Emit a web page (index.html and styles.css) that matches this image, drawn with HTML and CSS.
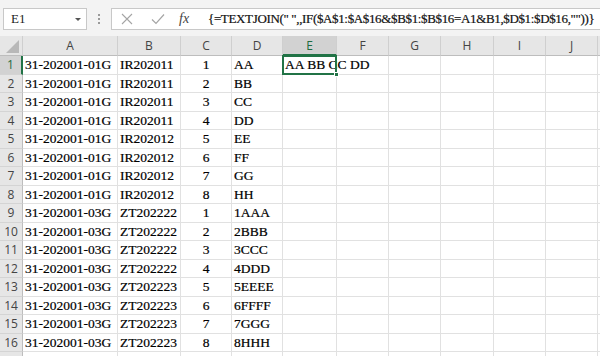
FILE: index.html
```
<!DOCTYPE html>
<html>
<head>
<meta charset="utf-8">
<link rel="stylesheet" href="styles.css">
</head>
<body>
<div class="app">
  <div class="toolbar">
    <div class="namebox"><span class="name">E1</span><span class="caret"></span></div>
    <div class="dots"><i></i><i></i><i></i></div>
    <div class="fbar">
      <div class="fbtns">
        <svg class="ic" width="14" height="14" viewBox="0 0 14 14"><path d="M2 2L12 12M12 2L2 12" stroke="#a5a5a5" stroke-width="1.1" fill="none"/></svg>
        <svg class="ic ic-ok" width="16" height="14" viewBox="0 0 16 14"><path d="M2 7.5L6 11.5L14 2.5" stroke="#a5a5a5" stroke-width="1.2" fill="none"/></svg>
        <span class="fx">fx</span>
      </div>
      <div class="formula">{=TEXTJOIN(" ",,IF($A$1:$A$16&amp;$B$1:$B$16=A1&amp;B1,$D$1:$D$16,""))}</div>
    </div>
  </div>
  <div class="sheet">
    <div class="row head">
      <div class="corner"><span class="tri"></span></div>
      <div class="ch">A</div><div class="ch">B</div><div class="ch">C</div><div class="ch">D</div><div class="ch sel">E</div><div class="ch">F</div><div class="ch">G</div><div class="ch">H</div><div class="ch">I</div><div class="ch">J</div><div class="ch"></div>
    </div>
    <div class="row"><div class="rh sel">1</div><div class="c">31-202001-01G</div><div class="c">IR202011</div><div class="c n">1</div><div class="c">AA</div><div class="c active"><span class="ov">AA BB CC DD</span><div class="selbox"><span class="handle"></span></div></div><div class="c nb"></div><div class="c"></div><div class="c"></div><div class="c"></div><div class="c"></div><div class="c"></div></div>
    <div class="row"><div class="rh">2</div><div class="c">31-202001-01G</div><div class="c">IR202011</div><div class="c n">2</div><div class="c">BB</div><div class="c"></div><div class="c"></div><div class="c"></div><div class="c"></div><div class="c"></div><div class="c"></div><div class="c"></div></div>
    <div class="row"><div class="rh">3</div><div class="c">31-202001-01G</div><div class="c">IR202011</div><div class="c n">3</div><div class="c">CC</div><div class="c"></div><div class="c"></div><div class="c"></div><div class="c"></div><div class="c"></div><div class="c"></div><div class="c"></div></div>
    <div class="row"><div class="rh">4</div><div class="c">31-202001-01G</div><div class="c">IR202011</div><div class="c n">4</div><div class="c">DD</div><div class="c"></div><div class="c"></div><div class="c"></div><div class="c"></div><div class="c"></div><div class="c"></div><div class="c"></div></div>
    <div class="row"><div class="rh">5</div><div class="c">31-202001-01G</div><div class="c">IR202012</div><div class="c n">5</div><div class="c">EE</div><div class="c"></div><div class="c"></div><div class="c"></div><div class="c"></div><div class="c"></div><div class="c"></div><div class="c"></div></div>
    <div class="row"><div class="rh">6</div><div class="c">31-202001-01G</div><div class="c">IR202012</div><div class="c n">6</div><div class="c">FF</div><div class="c"></div><div class="c"></div><div class="c"></div><div class="c"></div><div class="c"></div><div class="c"></div><div class="c"></div></div>
    <div class="row"><div class="rh">7</div><div class="c">31-202001-01G</div><div class="c">IR202012</div><div class="c n">7</div><div class="c">GG</div><div class="c"></div><div class="c"></div><div class="c"></div><div class="c"></div><div class="c"></div><div class="c"></div><div class="c"></div></div>
    <div class="row"><div class="rh">8</div><div class="c">31-202001-01G</div><div class="c">IR202012</div><div class="c n">8</div><div class="c">HH</div><div class="c"></div><div class="c"></div><div class="c"></div><div class="c"></div><div class="c"></div><div class="c"></div><div class="c"></div></div>
    <div class="row"><div class="rh">9</div><div class="c">31-202001-03G</div><div class="c">ZT202222</div><div class="c n">1</div><div class="c">1AAA</div><div class="c"></div><div class="c"></div><div class="c"></div><div class="c"></div><div class="c"></div><div class="c"></div><div class="c"></div></div>
    <div class="row"><div class="rh">10</div><div class="c">31-202001-03G</div><div class="c">ZT202222</div><div class="c n">2</div><div class="c">2BBB</div><div class="c"></div><div class="c"></div><div class="c"></div><div class="c"></div><div class="c"></div><div class="c"></div><div class="c"></div></div>
    <div class="row"><div class="rh">11</div><div class="c">31-202001-03G</div><div class="c">ZT202222</div><div class="c n">3</div><div class="c">3CCC</div><div class="c"></div><div class="c"></div><div class="c"></div><div class="c"></div><div class="c"></div><div class="c"></div><div class="c"></div></div>
    <div class="row"><div class="rh">12</div><div class="c">31-202001-03G</div><div class="c">ZT202222</div><div class="c n">4</div><div class="c">4DDD</div><div class="c"></div><div class="c"></div><div class="c"></div><div class="c"></div><div class="c"></div><div class="c"></div><div class="c"></div></div>
    <div class="row"><div class="rh">13</div><div class="c">31-202001-03G</div><div class="c">ZT202223</div><div class="c n">5</div><div class="c">5EEEE</div><div class="c"></div><div class="c"></div><div class="c"></div><div class="c"></div><div class="c"></div><div class="c"></div><div class="c"></div></div>
    <div class="row"><div class="rh">14</div><div class="c">31-202001-03G</div><div class="c">ZT202223</div><div class="c n">6</div><div class="c">6FFFF</div><div class="c"></div><div class="c"></div><div class="c"></div><div class="c"></div><div class="c"></div><div class="c"></div><div class="c"></div></div>
    <div class="row"><div class="rh">15</div><div class="c">31-202001-03G</div><div class="c">ZT202223</div><div class="c n">7</div><div class="c">7GGG</div><div class="c"></div><div class="c"></div><div class="c"></div><div class="c"></div><div class="c"></div><div class="c"></div><div class="c"></div></div>
    <div class="row"><div class="rh">16</div><div class="c">31-202001-03G</div><div class="c">ZT202223</div><div class="c n">8</div><div class="c">8HHH</div><div class="c"></div><div class="c"></div><div class="c"></div><div class="c"></div><div class="c"></div><div class="c"></div><div class="c"></div></div>
    <div class="row"><div class="rh"></div><div class="c"></div><div class="c"></div><div class="c"></div><div class="c"></div><div class="c"></div><div class="c"></div><div class="c"></div><div class="c"></div><div class="c"></div><div class="c"></div><div class="c"></div></div>
  </div>
</div>
</body>
</html>
```
FILE: styles.css
```
* { box-sizing: border-box; }
html, body { margin: 0; padding: 0; background: #fff; }
body { width: 600px; height: 356px; overflow: hidden; }
.app { width: 600px; height: 356px; overflow: hidden; display: flex; flex-direction: column; }

.toolbar { height: 36px; flex: none; background: #f3f3f3; display: flex; align-items: flex-start; padding-top: 8px; padding-left: 3px; }
.namebox { flex: none; width: 84px; height: 22px; background: #fff; border: 1px solid #c8c8c8; display: flex; align-items: center; justify-content: space-between; padding: 0 5px 0 7px; }
.name { font-family: "Liberation Serif", serif; font-size: 13px; color: #222; }
.caret { width: 0; height: 0; border-left: 3px solid transparent; border-right: 3px solid transparent; border-top: 3px solid #555; }
.dots { flex: none; width: 24px; height: 22px; display: flex; flex-direction: column; align-items: center; justify-content: center; gap: 2px; }
.dots i { display: block; width: 2px; height: 2px; background: #9a9a9a; }
.fbar { flex: 1; min-width: 0; height: 22px; background: #fff; border: 1px solid #c8c8c8; border-right: none; display: flex; align-items: center; }
.fbtns { width: 92px; flex: none; display: flex; align-items: center; padding-left: 8px; height: 100%; }
.ic { display: block; }
.ic-ok { margin-left: 16px; }
.fx { margin-left: 13px; font-family: "Liberation Serif", serif; font-style: italic; font-size: 14px; color: #444; }
.formula { flex: 1; min-width: 0; overflow: hidden; font-family: "Liberation Serif", serif; font-size: 13px; letter-spacing: -0.35px; color: #111; white-space: nowrap; padding-left: 4px; -webkit-text-stroke: 0.2px #111; }

.sheet { flex: 1; display: flex; flex-direction: column; }
.row { display: grid; grid-template-columns: 23px 95px 63px 51px 51px 54px 52px 52px 53px 52px 52px 20px; height: 18.5px; flex: none; }
.row.head { height: 20px; background: #e6e6e6; }
.corner { position: relative; border-right: 1px solid #cfcfcf; border-bottom: 1px solid #bdbdbd; }
.tri { position: absolute; right: 3px; bottom: 2px; width: 0; height: 0; border-left: 13px solid transparent; border-bottom: 13px solid #b8b8b8; }
.ch { font-family: "Open Sans", "Liberation Sans", sans-serif; font-size: 12px; color: #444; display: flex; align-items: center; justify-content: center; border-right: 1px solid #cfcfcf; border-bottom: 1px solid #bdbdbd; }
.ch.sel { background: #d2d2d2; color: #1e6b3f; border-bottom: 2px solid #217346; }
.rh { background: #e6e6e6; font-family: "Open Sans", "Liberation Sans", sans-serif; font-size: 12px; color: #444; display: flex; align-items: center; justify-content: center; border-right: 1px solid #bdbdbd; border-bottom: 1px solid #d4d4d4; }
.rh.sel { background: #d2d2d2; color: #1e6b3f; border-right: 2px solid #217346; }
.c { font-family: "Liberation Serif", serif; font-size: 13.5px; color: #000; -webkit-text-stroke: 0.2px #000; border-right: 1px solid #e1e1e1; border-bottom: 1px solid #e1e1e1; padding-left: 2px; white-space: nowrap; display: flex; align-items: center; line-height: 1; }
.c.n { justify-content: center; padding-left: 0; }
.c.active { position: relative; overflow: visible; z-index: 2; }
.ov { position: relative; z-index: 1; }
.selbox { position: absolute; left: -1px; top: -1px; right: -1px; bottom: -1px; border: 2px solid #217346; z-index: 3; }
.handle { position: absolute; right: -4px; bottom: -4px; width: 5px; height: 5px; background: #217346; border: 1px solid #fff; }
```
